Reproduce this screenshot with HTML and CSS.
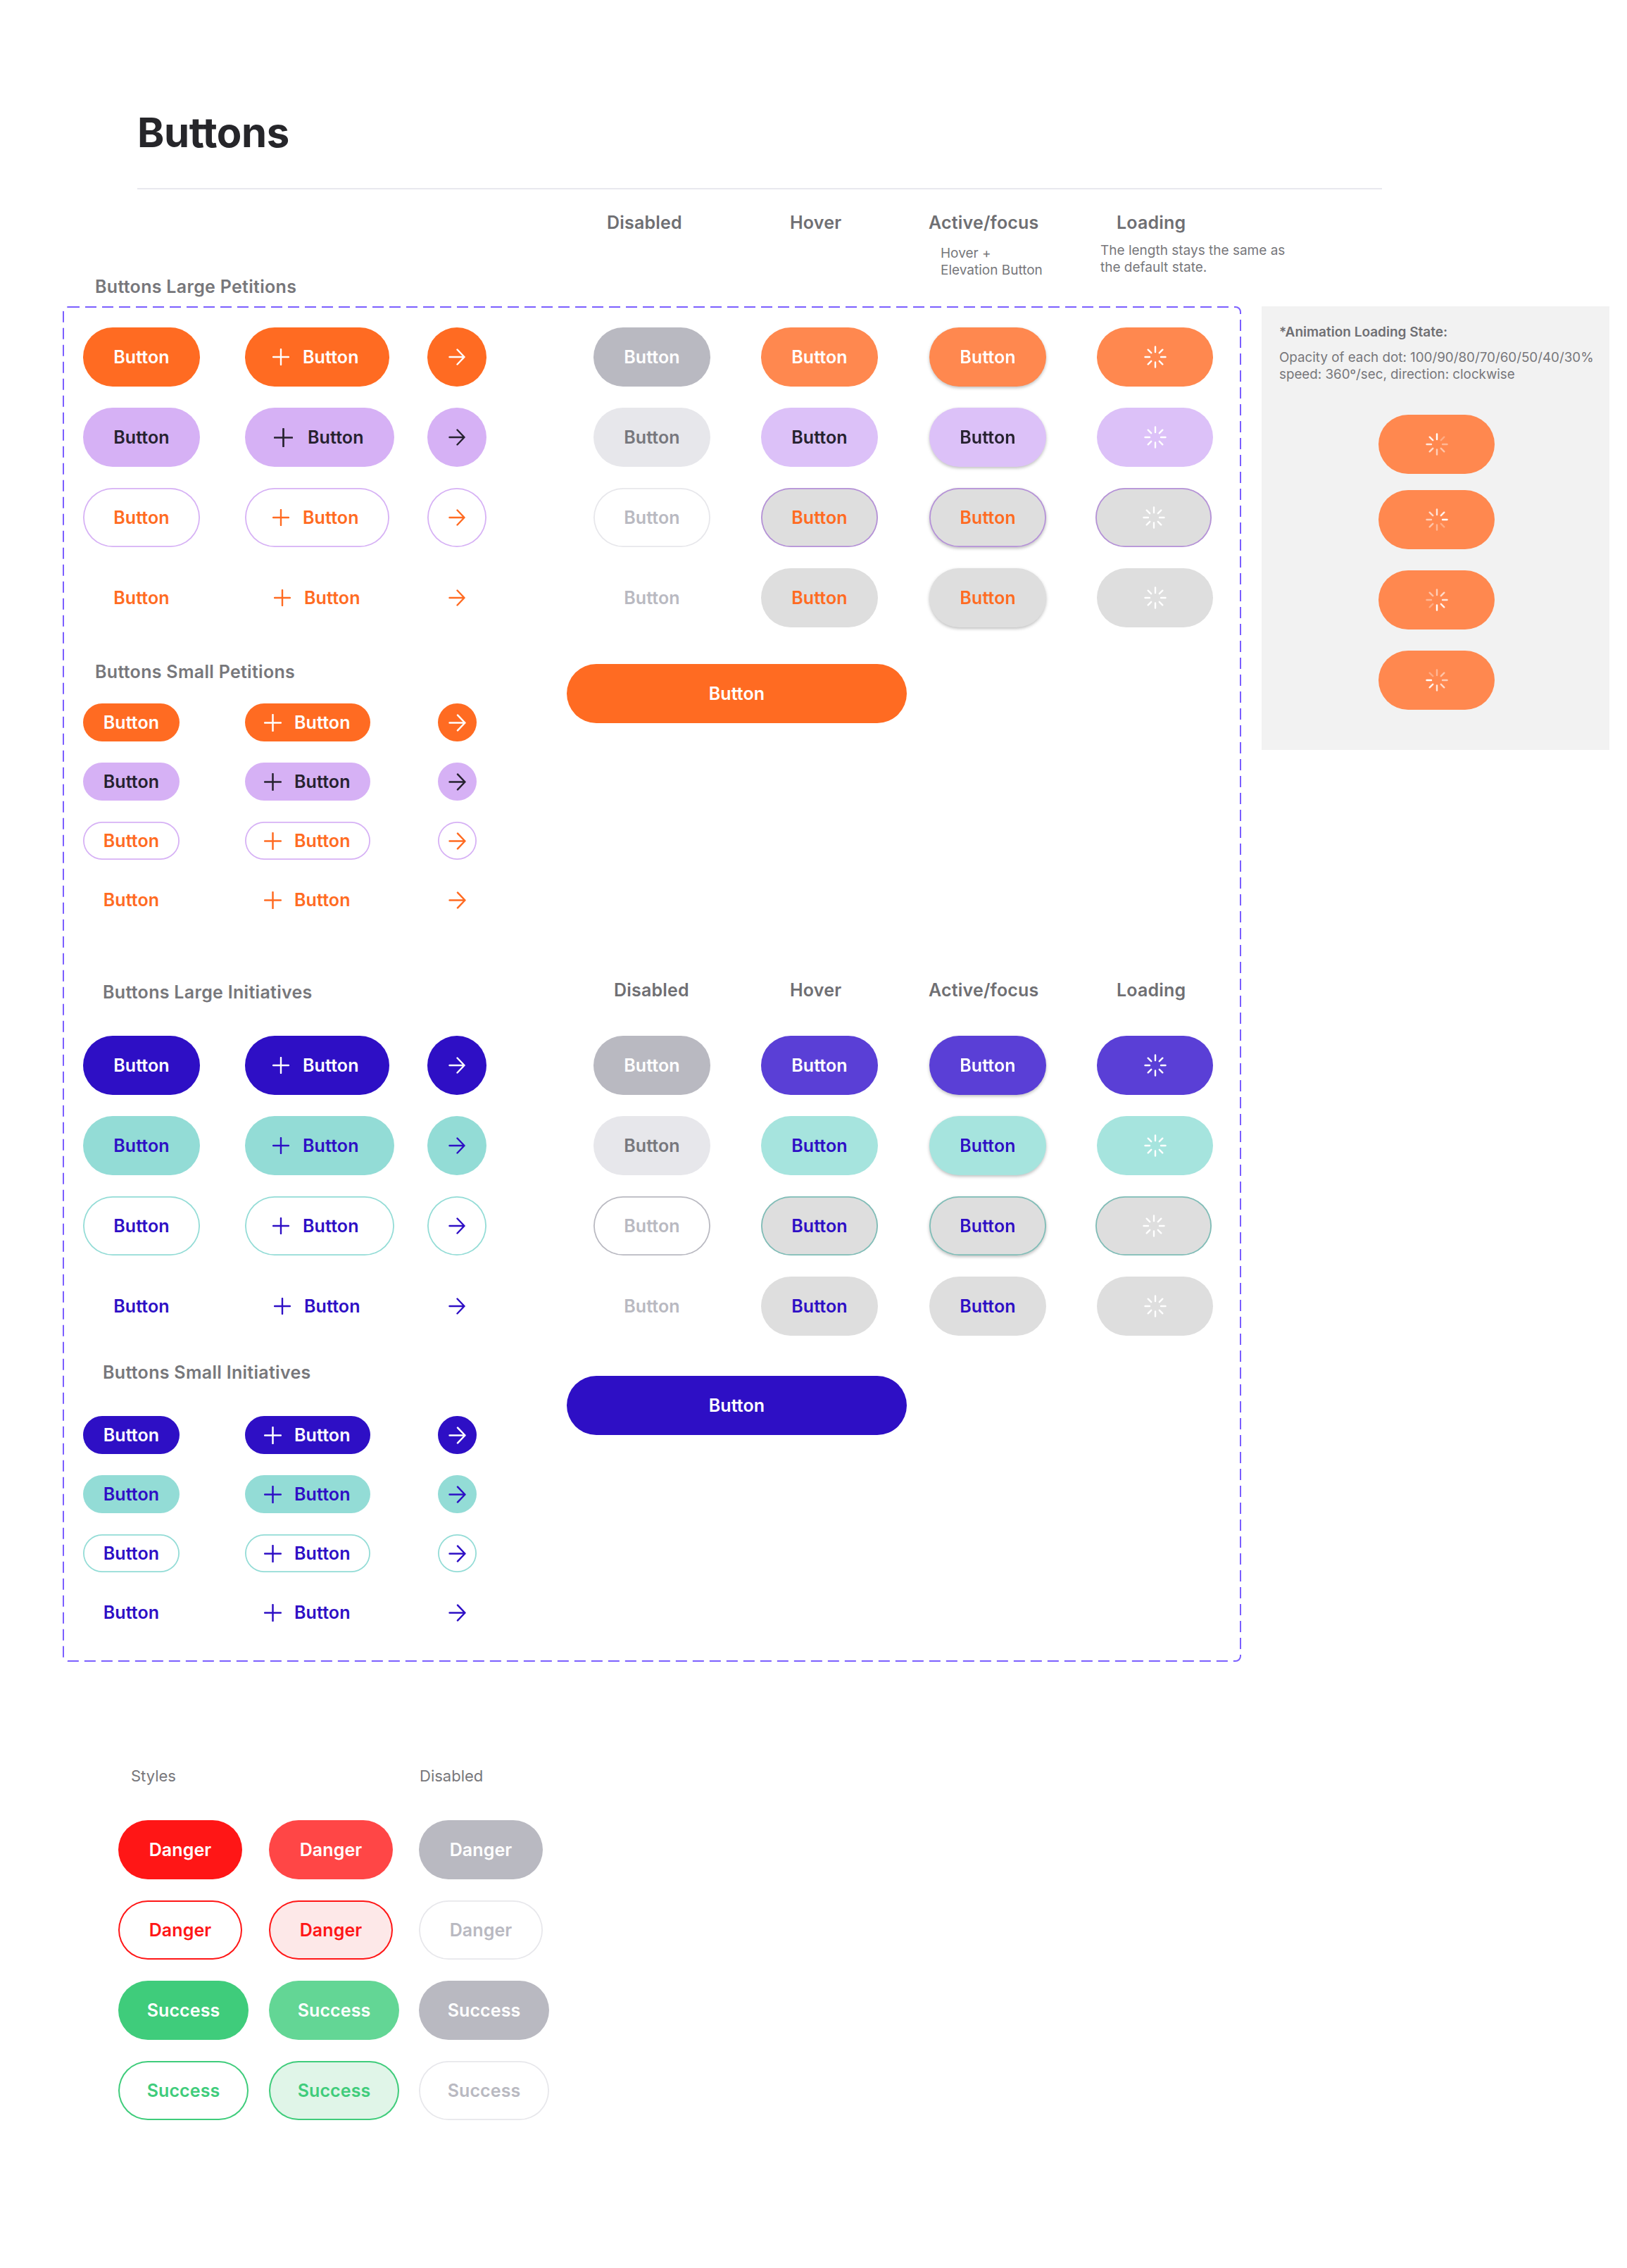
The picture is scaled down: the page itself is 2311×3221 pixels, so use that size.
FILE: index.html
```html
<!DOCTYPE html>
<html lang="en">
<head>
  <meta charset="UTF-8">
  <meta name="viewport" content="width=device-width, initial-scale=1.0">
  <title>Buttons</title>
  <link rel="stylesheet" href="styles.css">
</head>
<body>
  <svg class="defs" xmlns="http://www.w3.org/2000/svg">
    <symbol id="plus" viewBox="0 0 24 24"><path d="M12 1v22M1 12h22" fill="none" stroke="currentColor" stroke-width="2.4" stroke-linecap="round"/></symbol>
    <symbol id="arrow" viewBox="0 0 24 24"><path d="M1.5 12h21M12.5 1.5 22.5 12 12.5 22.5" fill="none" stroke="currentColor" stroke-width="2.4" stroke-linecap="round" stroke-linejoin="round"/></symbol>
    <symbol id="spin" viewBox="0 0 32 32">
      <g fill="none" stroke="#fff" stroke-width="2.4" stroke-linecap="round">
        <path d="M16 1.5V9M26.3 5.7l-4.5 4.5M30.5 16H24M26.3 26.3l-4.5-4.5M16 30.5V23.5M5.7 26.3l4.5-4.5M1.5 16H8M5.7 5.7l4.5 4.5"/>
      </g>
    </symbol>
    <symbol id="spin-n" viewBox="0 0 32 32">
      <g fill="none" stroke="#fff" stroke-width="2.4" stroke-linecap="round">
        <path d="M16 1.5V9"/><path d="M26.3 5.7l-4.5 4.5" opacity=".3"/><path d="M30.5 16H24" opacity=".4"/><path d="M26.3 26.3l-4.5-4.5" opacity=".5"/><path d="M16 30.5V23.5" opacity=".6"/><path d="M5.7 26.3l4.5-4.5" opacity=".7"/><path d="M1.5 16H8" opacity=".8"/><path d="M5.7 5.7l4.5 4.5" opacity=".9"/>
      </g>
    </symbol>
    <symbol id="spin-e" viewBox="0 0 32 32">
      <g fill="none" stroke="#fff" stroke-width="2.4" stroke-linecap="round">
        <path d="M16 1.5V9" opacity=".8"/><path d="M26.3 5.7l-4.5 4.5" opacity=".9"/><path d="M30.5 16H24"/><path d="M26.3 26.3l-4.5-4.5" opacity=".3"/><path d="M16 30.5V23.5" opacity=".4"/><path d="M5.7 26.3l4.5-4.5" opacity=".5"/><path d="M1.5 16H8" opacity=".6"/><path d="M5.7 5.7l4.5 4.5" opacity=".7"/>
      </g>
    </symbol>
    <symbol id="spin-s" viewBox="0 0 32 32">
      <g fill="none" stroke="#fff" stroke-width="2.4" stroke-linecap="round">
        <path d="M16 1.5V9" opacity=".6"/><path d="M26.3 5.7l-4.5 4.5" opacity=".7"/><path d="M30.5 16H24" opacity=".8"/><path d="M26.3 26.3l-4.5-4.5" opacity=".9"/><path d="M16 30.5V23.5"/><path d="M5.7 26.3l4.5-4.5" opacity=".3"/><path d="M1.5 16H8" opacity=".4"/><path d="M5.7 5.7l4.5 4.5" opacity=".5"/>
      </g>
    </symbol>
    <symbol id="spin-w" viewBox="0 0 32 32">
      <g fill="none" stroke="#fff" stroke-width="2.4" stroke-linecap="round">
        <path d="M16 1.5V9" opacity=".4"/><path d="M26.3 5.7l-4.5 4.5" opacity=".5"/><path d="M30.5 16H24" opacity=".6"/><path d="M26.3 26.3l-4.5-4.5" opacity=".7"/><path d="M16 30.5V23.5" opacity=".8"/><path d="M5.7 26.3l4.5-4.5" opacity=".9"/><path d="M1.5 16H8"/><path d="M5.7 5.7l4.5 4.5" opacity=".3"/>
      </g>
    </symbol>
  </svg>

  <div class="page">
    <h1 class="page-title">Buttons</h1>
    <div class="rule"></div>

    <div class="band">
      <h2 class="group-title">Buttons Large Petitions</h2>
      <div class="state-head">Disabled</div>
      <div class="state-head">Hover</div>
      <div class="state-head">Active/focus<p class="note note-active">Hover +<br>Elevation Button</p></div>
      <div class="state-head"><span class="head-loading">Loading</span><p class="note">The length stays the same as<br>the default state.</p></div>
    </div>

    <div class="main">
      <div class="frame">
        <svg class="frame-line" xmlns="http://www.w3.org/2000/svg"><rect x="1" y="1" rx="7" ry="7" width="1672" height="1923" /></svg>

        <!-- petitions -->
        <div class="block">
          <div class="variants">
            <div class="grid-lg">
              <a class="btn orange">Button</a>
              <a class="btn btn-icon orange"><svg class="ico"><use href="#plus"/></svg>Button</a>
              <a class="btn btn-round orange"><svg class="ico"><use href="#arrow"/></svg></a>

              <a class="btn lilac">Button</a>
              <a class="btn btn-icon btn-icon-wide lilac"><svg class="ico ico-big"><use href="#plus"/></svg>Button</a>
              <a class="btn btn-round lilac"><svg class="ico"><use href="#arrow"/></svg></a>

              <a class="btn line-lilac">Button</a>
              <a class="btn btn-icon line-lilac"><svg class="ico"><use href="#plus"/></svg>Button</a>
              <a class="btn btn-round line-lilac"><svg class="ico"><use href="#arrow"/></svg></a>

              <a class="btn text-orange">Button</a>
              <a class="btn btn-icon btn-plain text-orange"><svg class="ico"><use href="#plus"/></svg>Button</a>
              <a class="btn btn-round text-orange"><svg class="ico"><use href="#arrow"/></svg></a>
            </div>

            <h2 class="group-title sub-petitions">Buttons Small Petitions</h2>
            <div class="grid-sm">
              <a class="btn btn-sm orange">Button</a>
              <a class="btn btn-sm btn-icon orange"><svg class="ico"><use href="#plus"/></svg>Button</a>
              <a class="btn btn-sm btn-round orange"><svg class="ico"><use href="#arrow"/></svg></a>

              <a class="btn btn-sm lilac">Button</a>
              <a class="btn btn-sm btn-icon lilac"><svg class="ico"><use href="#plus"/></svg>Button</a>
              <a class="btn btn-sm btn-round lilac"><svg class="ico"><use href="#arrow"/></svg></a>

              <a class="btn btn-sm line-lilac">Button</a>
              <a class="btn btn-sm btn-icon line-lilac"><svg class="ico"><use href="#plus"/></svg>Button</a>
              <a class="btn btn-sm btn-round line-lilac"><svg class="ico"><use href="#arrow"/></svg></a>

              <a class="btn btn-sm text-orange">Button</a>
              <a class="btn btn-sm btn-icon text-orange"><svg class="ico"><use href="#plus"/></svg>Button</a>
              <a class="btn btn-sm btn-round text-orange"><svg class="ico"><use href="#arrow"/></svg></a>
            </div>
          </div>

          <div class="states">
            <div class="grid-states">
              <a class="btn off">Button</a>
              <a class="btn orange-hover">Button</a>
              <a class="btn orange-hover raised">Button</a>
              <a class="btn btn-loading orange-hover"><svg class="spin"><use href="#spin"/></svg></a>

              <a class="btn off-light">Button</a>
              <a class="btn lilac-hover">Button</a>
              <a class="btn lilac-hover raised">Button</a>
              <a class="btn btn-loading lilac-hover"><svg class="spin"><use href="#spin"/></svg></a>

              <a class="btn off-line">Button</a>
              <a class="btn grey-lilac">Button</a>
              <a class="btn grey-lilac raised">Button</a>
              <a class="btn btn-loading nudge grey-lilac"><svg class="spin"><use href="#spin"/></svg></a>

              <a class="btn off-text">Button</a>
              <a class="btn grey text-orange">Button</a>
              <a class="btn grey text-orange raised">Button</a>
              <a class="btn btn-loading grey"><svg class="spin"><use href="#spin"/></svg></a>
            </div>
            <a class="btn btn-wide wide-petitions orange">Button</a>
          </div>
        </div>

        <!-- initiatives -->
        <div class="block block-initiatives">
          <div class="variants">
            <h2 class="group-title title-initiatives">Buttons Large Initiatives</h2>
            <div class="grid-lg">
              <a class="btn indigo">Button</a>
              <a class="btn btn-icon indigo"><svg class="ico"><use href="#plus"/></svg>Button</a>
              <a class="btn btn-round indigo"><svg class="ico"><use href="#arrow"/></svg></a>

              <a class="btn teal">Button</a>
              <a class="btn btn-icon btn-icon-wide teal"><svg class="ico"><use href="#plus"/></svg>Button</a>
              <a class="btn btn-round teal"><svg class="ico"><use href="#arrow"/></svg></a>

              <a class="btn line-teal">Button</a>
              <a class="btn btn-icon btn-icon-wide line-teal"><svg class="ico"><use href="#plus"/></svg>Button</a>
              <a class="btn btn-round line-teal"><svg class="ico"><use href="#arrow"/></svg></a>

              <a class="btn text-indigo">Button</a>
              <a class="btn btn-icon btn-plain text-indigo"><svg class="ico"><use href="#plus"/></svg>Button</a>
              <a class="btn btn-round text-indigo"><svg class="ico"><use href="#arrow"/></svg></a>
            </div>

            <h2 class="group-title sub-initiatives">Buttons Small Initiatives</h2>
            <div class="grid-sm">
              <a class="btn btn-sm indigo">Button</a>
              <a class="btn btn-sm btn-icon indigo"><svg class="ico"><use href="#plus"/></svg>Button</a>
              <a class="btn btn-sm btn-round indigo"><svg class="ico"><use href="#arrow"/></svg></a>

              <a class="btn btn-sm teal">Button</a>
              <a class="btn btn-sm btn-icon teal"><svg class="ico"><use href="#plus"/></svg>Button</a>
              <a class="btn btn-sm btn-round teal"><svg class="ico"><use href="#arrow"/></svg></a>

              <a class="btn btn-sm line-teal">Button</a>
              <a class="btn btn-sm btn-icon line-teal"><svg class="ico"><use href="#plus"/></svg>Button</a>
              <a class="btn btn-sm btn-round line-teal"><svg class="ico"><use href="#arrow"/></svg></a>

              <a class="btn btn-sm text-indigo">Button</a>
              <a class="btn btn-sm btn-icon text-indigo"><svg class="ico"><use href="#plus"/></svg>Button</a>
              <a class="btn btn-sm btn-round text-indigo"><svg class="ico"><use href="#arrow"/></svg></a>
            </div>
          </div>

          <div class="states">
            <div class="head-row">
              <div class="state-head head-disabled">Disabled</div>
              <div class="state-head">Hover</div>
              <div class="state-head">Active/focus</div>
              <div class="state-head"><span class="head-loading">Loading</span></div>
            </div>
            <div class="grid-states">
              <a class="btn off">Button</a>
              <a class="btn indigo-hover">Button</a>
              <a class="btn indigo-hover raised">Button</a>
              <a class="btn btn-loading indigo-hover"><svg class="spin"><use href="#spin"/></svg></a>

              <a class="btn off-light">Button</a>
              <a class="btn teal-hover">Button</a>
              <a class="btn teal-hover raised">Button</a>
              <a class="btn btn-loading teal-hover"><svg class="spin"><use href="#spin"/></svg></a>

              <a class="btn off-line-dark">Button</a>
              <a class="btn grey-teal">Button</a>
              <a class="btn grey-teal raised">Button</a>
              <a class="btn btn-loading nudge grey-teal"><svg class="spin"><use href="#spin"/></svg></a>

              <a class="btn off-text">Button</a>
              <a class="btn grey text-indigo">Button</a>
              <a class="btn grey text-indigo">Button</a>
              <a class="btn btn-loading grey"><svg class="spin"><use href="#spin"/></svg></a>
            </div>
            <a class="btn btn-wide wide-initiatives indigo">Button</a>
          </div>
        </div>
      </div>

      <aside class="panel">
        <h3 class="panel-title">*Animation Loading State:</h3>
        <p class="panel-text">Opacity of each dot: 100/90/80/70/60/50/40/30%<br>speed: 360º/sec, direction: clockwise</p>
        <a class="btn btn-loading orange-hover"><svg class="spin"><use href="#spin-n"/></svg></a>
        <a class="btn btn-loading orange-hover panel-tight"><svg class="spin"><use href="#spin-e"/></svg></a>
        <a class="btn btn-loading orange-hover"><svg class="spin"><use href="#spin-s"/></svg></a>
        <a class="btn btn-loading orange-hover"><svg class="spin"><use href="#spin-w"/></svg></a>
      </aside>
    </div>

    <section class="styles">
      <div class="styles-head">
        <span class="styles-label">Styles</span>
        <span class="styles-label">Disabled</span>
      </div>
      <div class="grid-styles">
        <a class="btn btn-danger red">Danger</a>
        <a class="btn btn-danger red-hover">Danger</a>
        <a class="btn btn-danger off">Danger</a>

        <a class="btn btn-danger line-red">Danger</a>
        <a class="btn btn-danger tint-red">Danger</a>
        <a class="btn btn-danger off-line">Danger</a>

        <a class="btn btn-success green">Success</a>
        <a class="btn btn-success green-hover">Success</a>
        <a class="btn btn-success off">Success</a>

        <a class="btn btn-success line-green">Success</a>
        <a class="btn btn-success tint-green">Success</a>
        <a class="btn btn-success off-line">Success</a>
      </div>
    </section>
  </div>
</body>
</html>
```

FILE: styles.css
```css
* {
  box-sizing: border-box;
}
body {
  margin: 0;
  background: #fff;
  font-family: Inter, "Liberation Sans", sans-serif;
  color: #26262a;
}
.defs {
  display: none;
}
.page {
  width: 2311px;
  height: 3221px;
  overflow: hidden;
}
.page-title {
  margin: 153px 0 0 195px;
  font-size: 58px;
  line-height: 70px;
  font-weight: 700;
  letter-spacing: -0.4px;
}
.rule {
  width: 1768px;
  height: 2px;
  margin: 44px 0 0 195px;
  background: #e8e8ee;
}

/* column headers */
.band {
  display: grid;
  grid-template-columns: 727px 260px 197px 244px 1fr;
  height: 166px;
  padding: 30px 0 0 135px;
}
.group-title {
  margin: 0;
  font-size: 25px;
  line-height: 34px;
  font-weight: 600;
  letter-spacing: 0.3px;
  color: #77777b;
}
.band .group-title {
  align-self: end;
  padding-bottom: 11px;
}
.state-head {
  font-size: 25px;
  line-height: 34px;
  font-weight: 600;
  letter-spacing: 0.2px;
  color: #6f6f73;
}
.head-loading {
  margin-left: 23px;
}
.note {
  margin: 0;
  padding-top: 11px;
  font-size: 19px;
  line-height: 24px;
  font-weight: 400;
  letter-spacing: 0;
  color: #77777b;
}
.note-active {
  margin: 15px 0 0 17px;
  padding: 0;
}

/* main area */
.main {
  display: flex;
  align-items: flex-start;
  gap: 29px;
  margin-left: 89px;
}
.frame {
  position: relative;
  width: 1674px;
  height: 1925px;
  padding: 30px 0 0 29px;
}
.frame-line {
  position: absolute;
  left: 0;
  top: 0;
  width: 1674px;
  height: 1925px;
  fill: none;
  stroke: #7b5fff;
  stroke-width: 2;
  stroke-dasharray: 16 8;
  pointer-events: none;
}
.block {
  display: grid;
  grid-template-columns: 725px 1fr;
}
.block-initiatives {
  margin-top: 84px;
}
.grid-lg {
  display: grid;
  grid-template-columns: 230px 259px 1fr;
  grid-auto-rows: 84px;
  row-gap: 30px;
  justify-items: start;
}
.grid-sm {
  display: grid;
  grid-template-columns: 230px 274px 1fr;
  grid-auto-rows: 54px;
  row-gap: 30px;
  justify-items: start;
}
.grid-states {
  display: grid;
  grid-template-columns: 238px 239px 238px 1fr;
  grid-auto-rows: 84px;
  row-gap: 30px;
  justify-items: start;
}
.sub-petitions {
  margin: 46px 0 28px 17px;
}
.title-initiatives {
  margin: 3px 0 45px 28px;
}
.sub-initiatives {
  margin: 35px 0 45px 28px;
}
.head-row {
  display: grid;
  grid-template-columns: 260px 197px 244px 1fr;
  margin-bottom: 48px;
  padding-left: 19px;
}
.head-disabled {
  margin-left: 10px;
}

/* buttons */
.btn {
  display: flex;
  align-items: center;
  justify-content: center;
  width: 166px;
  height: 84px;
  border-radius: 42px;
  font-size: 25px;
  font-weight: 600;
  letter-spacing: 0.1px;
  line-height: 1;
}
.btn-sm {
  width: 137px;
  height: 54px;
  border-radius: 27px;
}
.btn-icon {
  justify-content: flex-start;
  gap: 19px;
  width: 205px;
  padding-left: 39px;
}
.btn-icon-wide {
  width: 212px;
}
.btn-plain {
  padding-left: 41px;
}
.btn-sm.btn-icon {
  gap: 18px;
  width: 178px;
  padding-left: 27px;
}
.btn-round {
  width: 84px;
}
.btn-sm.btn-round {
  width: 55px;
}
.btn-loading {
  width: 165px;
}
.btn-wide {
  width: 483px;
  margin-left: -38px;
}
.wide-petitions {
  margin-top: 52px;
}
.wide-initiatives {
  margin-top: 57px;
}
.btn-danger {
  width: 176px;
}
.btn-success {
  width: 185px;
}
.nudge {
  margin-left: -2px;
}
.raised {
  filter: drop-shadow(0 2px 2px rgba(0, 0, 0, 0.25));
}
.ico {
  width: 24px;
  height: 24px;
  flex: none;
}
.ico-big {
  width: 27px;
  height: 27px;
  margin-left: 2px;
  margin-right: 2px;
}
.btn-sm .ico {
  width: 25px;
  height: 25px;
}
.spin {
  width: 32px;
  height: 32px;
}

/* colours */
.orange { background: #ff6b22; color: #fff; }
.orange-hover { background: #ff884f; color: #fff; }
.lilac { background: #d6b1f5; color: #26222f; }
.lilac-hover { background: #dcc1f8; color: #26222f; }
.line-lilac { box-shadow: inset 0 0 0 1.8px #d6b1f5; color: #ff6b22; }
.text-orange { color: #ff6b22; }
.grey { background: #dedede; }
.grey-lilac { background: #dedede; box-shadow: inset 0 0 0 1.8px #b591d8; color: #ff6b22; }
.grey-teal { background: #dedede; box-shadow: inset 0 0 0 1.8px #7fbdb7; color: #2e0fc5; }
.indigo { background: #2e0fc5; color: #fff; }
.indigo-hover { background: #5a3fd6; color: #fff; }
.teal { background: #93dcd6; color: #2e0fc5; }
.teal-hover { background: #a6e4de; color: #2e0fc5; }
.line-teal { box-shadow: inset 0 0 0 1.8px #93dcd6; color: #2e0fc5; }
.text-indigo { color: #2e0fc5; }
.off { background: #b9b9c1; color: #fff; }
.off-light { background: #e7e7eb; color: #77777d; }
.off-line { box-shadow: inset 0 0 0 1.8px #e7e7eb; color: #b9b9c1; }
.off-line-dark { box-shadow: inset 0 0 0 1.8px #b9b9c1; color: #b9b9c1; }
.off-text { color: #b9b9c1; }
.red { background: #ff1616; color: #fff; }
.red-hover { background: #ff4646; color: #fff; }
.line-red { box-shadow: inset 0 0 0 2px #ff1616; color: #ff1616; }
.tint-red { background: #fde8e8; box-shadow: inset 0 0 0 2px #ff1616; color: #ff1616; }
.green { background: #3fcc7b; color: #fff; }
.green-hover { background: #63d695; color: #fff; }
.line-green { box-shadow: inset 0 0 0 2px #3fcc7b; color: #3fcc7b; }
.tint-green { background: #e0f5e8; box-shadow: inset 0 0 0 2px #3fcc7b; color: #3fcc7b; }

/* side panel */
.panel {
  width: 494px;
  height: 630px;
  padding: 24px 25px;
  background: #f2f2f2;
}
.panel-title {
  margin: 0;
  font-size: 19px;
  line-height: 26px;
  font-weight: 600;
  color: #6f6f73;
}
.panel-text {
  margin: 11px 0 45px;
  font-size: 18.8px;
  line-height: 24px;
  white-space: nowrap;
  color: #77777b;
}
.panel .btn {
  margin: 0 0 30px 141px;
}
.panel .panel-tight {
  margin-top: -7px;
}

/* danger / success */
.styles {
  margin: 147px 0 0 168px;
}
.styles-head {
  display: grid;
  grid-template-columns: 410px 1fr;
  height: 30px;
  margin-bottom: 48px;
  padding-left: 18px;
  font-size: 22px;
  line-height: 30px;
  color: #77777b;
}
.grid-styles {
  display: grid;
  grid-template-columns: 214px 213px 1fr;
  grid-auto-rows: 84px;
  row-gap: 30px;
  justify-items: start;
}
```
